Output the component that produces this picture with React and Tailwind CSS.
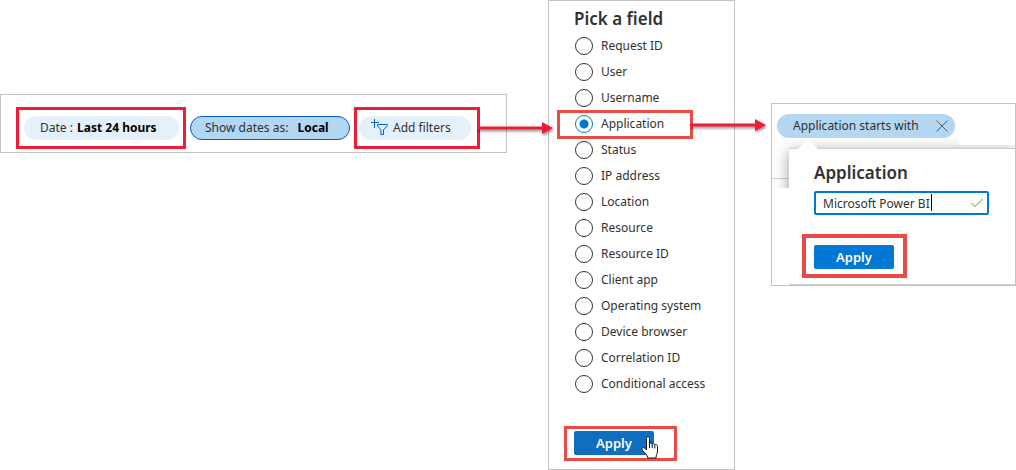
import { useState } from "react";

const FIELDS = [
  "Request ID",
  "User",
  "Username",
  "Application",
  "Status",
  "IP address",
  "Location",
  "Resource",
  "Resource ID",
  "Client app",
  "Operating system",
  "Device browser",
  "Correlation ID",
  "Conditional access",
];

function Arrow() {
  return (
    <svg
      className="pointer-events-none absolute left-full top-1/2 z-10 h-5 w-[76px] -translate-y-1/2 overflow-visible drop-shadow-[1px_2px_1px_rgba(0,0,0,0.4)]"
      viewBox="0 0 76 20"
      aria-hidden="true"
    >
      <path d="M0 8.5H65V4L76 10L65 16V11.5H0Z" fill="#ee1c37" />
    </svg>
  );
}

function AddFilterIcon() {
  return (
    <svg className="h-[18px] w-[18px] shrink-0" viewBox="0 0 18 18" fill="none" stroke="#015cda" aria-hidden="true">
      <path d="M3.5 0V9M-1 3.5H8" />
      <path d="M6.5 5.5H16.3V6.8L12.5 10.8V15.5H9.9V10.8L6.5 6.8Z" />
    </svg>
  );
}

function HandCursor() {
  return (
    <svg className="pointer-events-none absolute left-[74px] top-[7px] h-[23px] w-[18px]" viewBox="0 0 18 23" aria-hidden="true">
      <path
        d="M5.5 14V2.5C5.5 0.2 8.5 0.2 8.5 2.5V8C8.5 6.5 11.2 6.5 11.2 8.5C11.2 7 13.8 7.2 13.8 9.2C14 8 16.5 8.2 16.5 10.5V15C16.5 18 15 18.5 15 22H6.8C6.8 19 3.5 17.5 1.2 13.8C0.2 12 2.5 10.5 3.8 12.2Z"
        fill="white"
        stroke="#111827"
        strokeLinejoin="round"
      />
      <path d="M8.5 8V12M11.2 8.5V12M13.8 9.5V12.5" stroke="#111827" fill="none" />
    </svg>
  );
}

function FilterBar() {
  return (
    <section className="mt-[94px] flex h-[59px] items-start gap-1 border border-[#c3c3c3] pl-[15px] pt-3">
      <div className="flex h-[42px] items-center border-[3px] border-[#ee1c37] pl-[5px] pr-1">
        <button className="h-6 w-[155px] whitespace-nowrap rounded-full bg-[#e4f1fb] pl-4 text-left leading-6">
          Date : <b className="ml-px font-bold text-black">Last 24 hours</b>
        </button>
      </div>
      <button className="mt-[9px] h-6 w-40 whitespace-nowrap rounded-full border border-[#015cda] bg-[#b3d6f2] pl-3.5 text-left leading-[22px]">
        Show dates as: <b className="ml-1.5 font-bold text-black">Local</b>
      </button>
      <div className="relative flex h-[42px] items-center border-[3px] border-[#ee1c37] pl-[2px] pr-[6px]">
        <button className="flex h-6 w-[112px] items-center gap-1 whitespace-nowrap rounded-full bg-[#e4f1fb] pl-3">
          <AddFilterIcon />
          Add filters
        </button>
        <Arrow />
      </div>
    </section>
  );
}

function FieldPicker() {
  const [field, setField] = useState("Application");
  return (
    <section className="h-[470px] border border-[#c3c3c3] pl-[25px] pt-1.5">
      <h2 className="text-[17px] font-semibold leading-6">Pick a field</h2>
      <ul className="mt-0.5 pl-px">
        {FIELDS.map((name) => (
          <li key={name} className="relative mr-[41px] flex h-[26px] items-center">
            <label className="flex items-center gap-2 whitespace-nowrap">
              <input
                type="radio"
                name="field"
                checked={field === name}
                onChange={() => setField(name)}
                className="h-[18px] w-[18px] shrink-0 appearance-none rounded-full border border-[#323130] bg-white checked:border-[#0078d4] checked:bg-[radial-gradient(circle,#0078d4_4px,white_5px)]"
              />
              {name}
            </label>
            {field === name && (
              <div className="pointer-events-none absolute -bottom-0.5 -left-[18px] -top-px right-0 border-[3px] border-[#e94b46]">
                <Arrow />
              </div>
            )}
          </li>
        ))}
      </ul>
      <div className="relative -ml-2.5 mt-[29px] h-[35px] w-[113px] border-[3px] border-[#e94b46] pl-[7px] pt-0.5">
        <button className="block h-6 w-20 rounded-xs bg-[#106ebe] text-[13px] font-semibold text-white">Apply</button>
        <HandCursor />
      </div>
    </section>
  );
}

function FilterEditor() {
  const [value, setValue] = useState("Microsoft Power BI");
  return (
    <section className="mt-[103px] h-[183px] border border-[#c3c3c3] pt-2.5">
      <div className="relative z-10 ml-[5px] flex h-6 w-[178px] items-center justify-between whitespace-nowrap rounded-full bg-[#b3d6f2] pl-4 pr-[7px]">
        Application starts with
        <button aria-label="Remove filter">
          <svg className="block h-3 w-3" viewBox="0 0 12 12" stroke="#605e5c" aria-hidden="true">
            <path d="M0.5 0.5L11.5 11.5M11.5 0.5L0.5 11.5" />
          </svg>
        </button>
      </div>
      <div className="relative mt-2.5 pl-[17px]">
        <div className="absolute -top-3 left-0 right-0 h-[52px] overflow-hidden" aria-hidden="true">
          <div className="absolute left-0 top-[42px] h-px w-4 bg-[#d2d0ce]" />
          <div className="absolute left-[17px] right-0 top-[12px] h-24 shadow-[0_3px_14px_rgba(0,0,0,0.4)]" />
          <div className="absolute right-0 top-0 h-[9px] w-14 bg-white" />
        </div>
        <div className="relative h-[137px] border-y border-[#d2d0ce] bg-white pl-[25px] pt-3">
          <svg className="absolute -top-2.5 left-[9px] h-2.5 w-5" viewBox="0 0 20 10" aria-hidden="true">
            <path d="M0 10L10 0L20 10Z" fill="white" />
          </svg>
          <h2 className="text-[17px] font-semibold leading-6">Application</h2>
          <div className="relative mt-[6px] w-[175px]">
            <input
              aria-label="Application"
              value={value}
              onChange={(e) => setValue(e.target.value)}
              className="block h-6 w-full rounded-xs border-2 border-[#0078d4] bg-white pl-[7px] pr-6 outline-none"
            />
            <span className="absolute left-[117px] top-[3px] h-[17px] w-px bg-black" />
            <svg className="absolute right-1.5 top-[7px] h-2.5 w-3" viewBox="0 0 12 10" fill="none" stroke="#57a300" aria-hidden="true">
              <path d="M0.5 5L4 8.5L11.5 1" />
            </svg>
          </div>
          <div className="-ml-3 mt-[19px] h-11 w-[105px] border-4 border-[#e94b46] pl-2 pt-[7px]">
            <button className="block h-6 w-20 rounded-xs bg-[#0078d4] text-[13px] font-semibold text-white">Apply</button>
          </div>
        </div>
      </div>
    </section>
  );
}

export default function App() {
  return (
    <main className="flex items-start justify-between bg-white font-['Noto_Sans','Open_Sans',sans-serif] text-xs leading-5 text-[#323130]">
      <div className="min-w-[507px] flex-[507]">
        <FilterBar />
      </div>
      <div className="ml-[41px] min-w-[187px] flex-[187]">
        <FieldPicker />
      </div>
      <div className="ml-9 min-w-[245px] flex-[245]">
        <FilterEditor />
      </div>
    </main>
  );
}
